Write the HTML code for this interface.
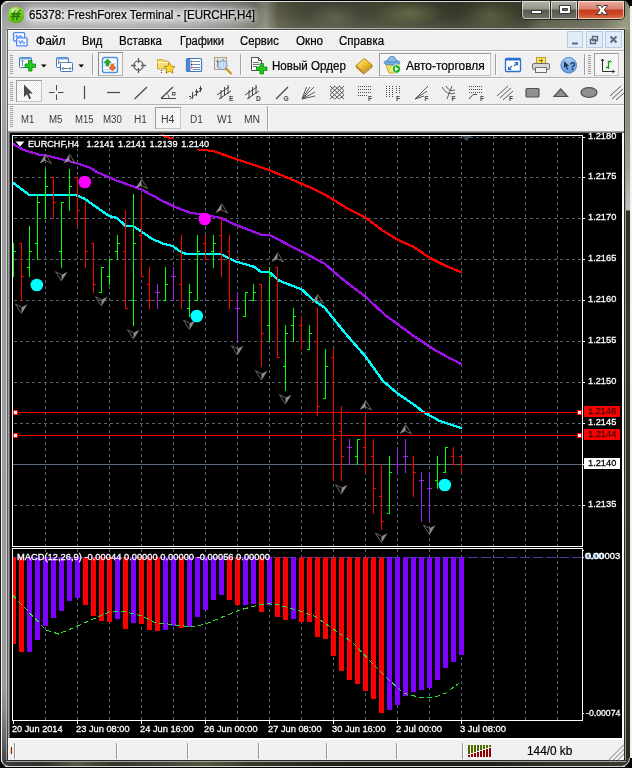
<!DOCTYPE html>
<html><head><meta charset="utf-8"><title>65378: FreshForex Terminal - [EURCHF,H4]</title>
<style>
html,body{margin:0;padding:0}
body{width:632px;height:768px;position:relative;overflow:hidden;background:#000;font-family:"Liberation Sans",sans-serif;font-size:12px;color:#000}
.abs{position:absolute}
.t{position:absolute;white-space:nowrap;line-height:1;transform-origin:0 0}
#frame{position:absolute;left:0;top:0;width:632px;height:768px;background:#b9b9b9}
#titlebg{position:absolute;left:0;top:1px;width:630px;height:29px;
 background:radial-gradient(ellipse 34px 12px at 410px 12px,rgba(128,136,88,.55),transparent),radial-gradient(ellipse 26px 16px at 335px 16px,rgba(120,124,90,.5),transparent),radial-gradient(ellipse 26px 12px at 490px 14px,rgba(110,118,80,.45),transparent),linear-gradient(90deg,#a0a0a0 0px,#a4a4a4 30px,#a0a0a0 120px,#949494 190px,#848480 230px,#74746a 254px,#8a8a7c 266px,#5c5c48 278px,#4c4c3a 300px,#45463a 335px,#484c34 400px,#383a2c 455px,#464a32 490px,#3c3e2c 525px,#5a5c48 540px,#6a6c58 600px,#909278 622px,#9a9c7c 632px)}
#tglow{position:absolute;left:24px;top:7px;width:228px;height:16px;border-radius:8px;background:linear-gradient(90deg,#fff 0,#fff 65%,rgba(255,255,255,.45) 100%);filter:blur(5px);opacity:.62}
#client{position:absolute;left:8px;top:30px;width:616px;height:730px;background:#f0f0f0}
#title{position:absolute;left:29px;top:7px;font-size:12.4px;white-space:nowrap;color:#000;text-shadow:0 0 6px #fff,0 0 9px #fff,0 0 12px #fff}
.menu{position:absolute;top:33px;font-size:12px;white-space:nowrap;transform-origin:0 0}
.tf{position:absolute;top:113px;font-size:10.5px;color:#333;white-space:nowrap}
.pl{position:absolute;left:588px;font-size:9.6px;color:#fff;white-space:nowrap;line-height:12px}
.pbox{position:absolute;left:584px;width:36px;height:11px;font-size:9.6px;line-height:11px;text-indent:4px;white-space:nowrap}
.pbox.red{background:#ff0000;color:#3a2a2a}
.pbox.wht{background:#fff;color:#000;height:10px;line-height:10px}
.tl{position:absolute;top:722px;font-size:9.6px;color:#fff;white-space:nowrap;line-height:12px}
.ct{position:absolute;font-size:9.6px;color:#fff;white-space:nowrap;line-height:11px;background:#000}
.sep{position:absolute;width:1px;background:#a0a0a0}
.grip{position:absolute;width:3px;height:18px;background:repeating-linear-gradient(180deg,#9a9a9a 0,#9a9a9a 1px,transparent 1px,transparent 2px)}
</style></head><body>
<!-- window frame -->
<div class="abs" style="left:0;top:0;width:630px;height:768px;background:#000"></div>
<div class="abs" style="left:630px;top:6px;width:2px;height:754px;background:#f4f4f4"></div>
<!-- left frame strip -->
<div class="abs" style="left:0;top:6px;width:8px;height:756px;background:linear-gradient(180deg,#a0a0a0 0,#a4a4a4 30px,#a6a6a6 90px,#9e9e9e 130px,#9c9c9c 680px,#8a8a8a 705px,#6a6a6a 730px,#505050 748px,#444 756px)"></div>
<div class="abs" style="left:0;top:6px;width:1px;height:756px;background:#1c1c1c"></div>
<div class="abs" style="left:1px;top:6px;width:1px;height:756px;background:#f2f2f2"></div>
<div class="abs" style="left:6px;top:28px;width:1px;height:734px;background:rgba(255,255,255,.45)"></div>
<div class="abs" style="left:7px;top:29px;width:1px;height:732px;background:rgba(0,0,0,.38)"></div>
<!-- right frame strip -->
<div class="abs" style="left:624px;top:6px;width:6px;height:756px;background:linear-gradient(180deg,#9a9c7c 0,#8c8c72 30px,#8c8c80 110px,#9c9c96 160px,#c2c2be 203px,#b8b8b4 204px,#2c3024 205px,#30341f 260px,#343a24 320px,#2c3020 600px,#2a2c20 756px)"></div>
<div class="abs" style="left:624px;top:29px;width:1px;height:732px;background:#26281e"></div>
<div class="abs" style="left:625px;top:28px;width:1px;height:734px;background:#9a9e96"></div>
<div id="titlebg"></div>
<div id="tglow"></div>
<div class="abs" style="left:2px;top:2px;width:626px;height:27px;background:linear-gradient(180deg,rgba(0,0,0,.13) 0,rgba(0,0,0,0) 50%,rgba(255,255,255,.10) 100%)"></div>
<div class="abs" style="left:0;top:6px;width:1px;height:30px;background:#1c1c1c"></div>
<div class="abs" style="left:1px;top:6px;width:1px;height:30px;background:#f2f2f2"></div>
<!-- bottom frame strip -->
<div class="abs" style="left:2px;top:760px;width:628px;height:7px;background:linear-gradient(90deg,#3c3c3c 0,#30302c 40px,#5a5a46 75px,#34342a 110px,#44453a 160px,#56573e 205px,#3a3a2c 245px,#222219 320px,#1e1e18 480px,#34342a 560px,#3a3a30 632px)"></div>
<div class="abs" style="left:7px;top:760px;width:618px;height:1px;background:#2a2a28"></div>
<div class="abs" style="left:6px;top:761px;width:620px;height:1px;background:#a4a4a0"></div>
<div class="abs" style="left:5px;top:766px;width:621px;height:1px;background:#d4d4d4"></div>
<div class="abs" style="left:0;top:767px;width:632px;height:1px;background:#000"></div>
<!-- top highlights -->
<div class="abs" style="left:6px;top:1px;width:620px;height:1px;background:rgba(255,255,255,.8)"></div>
<div class="abs" style="left:7px;top:28px;width:618px;height:1px;background:rgba(255,255,255,.5)"></div>
<div class="abs" style="left:7px;top:29px;width:618px;height:1px;background:#4a4a48"></div>
<!-- corners -->
<svg class="abs" style="left:0;top:0" width="632" height="768" viewBox="0 0 632 768">
<path d="M0 0H8Q2 1 0 8Z" fill="#000"/>
<path d="M1.5 9Q2 2.5 9 1.5" fill="none" stroke="#f0f0f0" stroke-width="1"/>
<path d="M632 0H622Q629 1 630 9V0Z" fill="#000"/>
<path d="M0 768H8Q2 767 0 759Z" fill="#000"/>
<path d="M1.5 759Q2 765.5 9 766.5" fill="none" stroke="#d8d8d8" stroke-width="1"/>
<path d="M632 768H620Q629 767 630 758H632Z" fill="#000"/>
<path d="M629.5 758Q629 765 622 766.5" fill="none" stroke="#d8d8d8" stroke-width="1"/>
</svg>
<div id="client"></div>
<!-- app icon -->
<svg class="abs" style="left:8px;top:7px" width="16" height="16" viewBox="0 0 16 16">
<defs><radialGradient id="gi" cx="0.42" cy="0.28" r="0.85"><stop offset="0" stop-color="#c8f880"/><stop offset="0.45" stop-color="#7cd820"/><stop offset="1" stop-color="#4aa008"/></radialGradient></defs>
<rect x="0" y="0" width="16" height="16" rx="7" fill="url(#gi)"/>
<path d="M8 3.600Q6.600 3.400 6.300 5.200L5.100 12.400M11.800 3.600Q10.400 3.400 10.100 5.200L8.900 12.400M3.800 6.800H12.200M3.300 9.400H11.700" stroke="#2c7a06" stroke-width="1.700" fill="none" stroke-linecap="round"/>
<ellipse cx="7" cy="3.200" rx="4.500" ry="1.800" fill="#fff" fill-opacity="0.350"/>
</svg>
<!-- caption buttons -->
<div class="abs" style="left:521px;top:0;width:104px;height:20px;border-radius:0 0 5px 5px;background:#23241c"></div>
<div class="abs" style="left:522px;top:1px;width:28px;height:18px;border-radius:0 0 0 4px;background:linear-gradient(180deg,#b4b4ac 0,#94948a 45%,#58584c 50%,#74746a 100%);box-shadow:inset 0 0 0 1px rgba(255,255,255,.6)"></div>
<div class="abs" style="left:551px;top:1px;width:26px;height:18px;background:linear-gradient(180deg,#b0b0a8 0,#909086 45%,#54544a 50%,#707066 100%);box-shadow:inset 0 0 0 1px rgba(255,255,255,.6)"></div>
<div class="abs" style="left:578px;top:1px;width:46px;height:18px;border-radius:0 0 4px 0;background:linear-gradient(180deg,#eab0a0 0,#d88070 45%,#c43a1c 50%,#cc4a28 75%,#d87850 100%);box-shadow:inset 0 0 0 1px rgba(255,255,255,.6)"></div>
<svg class="abs" style="left:521px;top:0" width="104" height="20" viewBox="0 0 104 20">
<rect x="10.5" y="10.5" width="10" height="3" fill="#fff" stroke="#3a3a3a" stroke-width="1"/>
<path d="M38.5 5.5h11v8h-11z M41.5 8.5h5v2h-5z" fill="#fff" fill-rule="evenodd" stroke="#3a3a3a" stroke-width="1"/>
<path d="M75.500 5.500h4l1.600 2.200 1.600-2.200h4l-3.500 4.400 3.500 4.600h-4l-1.600-2.300-1.600 2.300h-4l3.500-4.600z" fill="#fff" stroke="#4a3434" stroke-width="1"/>
</svg>
<!-- MDI icon & buttons -->
<svg class="abs" style="left:10px;top:30px" width="20" height="18" viewBox="10 30 20 18">
<rect x="13.600" y="32.600" width="11" height="8.400" rx="1" fill="#fff" stroke="#4a86f4" stroke-width="1.300"/>
<path d="M15.500 36.500l1.500-1.200v1.800h2.200l1-1.600 1.800 1.600" stroke="#4a86f4" stroke-width="1.100" fill="none"/>
<rect x="16.700" y="37.900" width="10.400" height="8" rx="1" fill="#fff" stroke="#4a86f4" stroke-width="1.300"/>
<path d="M18.700 40.300l1.800 3 1.600-2.800 1.800 3.200 1.300-1.300" stroke="#4a86f4" stroke-width="1.100" fill="none"/>
</svg>
<div class="abs" style="left:567px;top:31px;width:16px;height:17px;background:#e0ecf8;border:1px solid #b4cce4;box-sizing:border-box"></div>
<div class="abs" style="left:586px;top:31px;width:17px;height:17px;background:#e0ecf8;border:1px solid #b4cce4;box-sizing:border-box"></div>
<div class="abs" style="left:605px;top:31px;width:17px;height:17px;background:#e0ecf8;border:1px solid #b4cce4;box-sizing:border-box"></div>
<svg class="abs" style="left:567px;top:31px" width="56" height="17" viewBox="0 0 56 17">
<path d="M5 12.5h6" stroke="#5a6a80" stroke-width="2"/>
<path d="M25.5 5.5h5v4h-5z M23.5 8.5h5v4h-5z" fill="none" stroke="#5a6a80" stroke-width="1.4"/>
<path d="M43.5 5.5l6 6M49.5 5.5l-6 6" stroke="#5a6a80" stroke-width="2"/>
</svg>
<!-- toolbar separators lines -->
<div class="abs" style="left:8px;top:50px;width:616px;height:1px;background:#b0b0b0"></div>
<div class="abs" style="left:8px;top:51px;width:616px;height:1px;background:#fdfdfd"></div>
<div class="abs" style="left:8px;top:30px;width:616px;height:1px;background:#fdfdfd"></div>
<div class="abs" style="left:8px;top:77px;width:616px;height:1px;background:#b0b0b0"></div>
<div class="abs" style="left:8px;top:78px;width:616px;height:1px;background:#fbfbfb"></div>
<div class="abs" style="left:8px;top:104px;width:616px;height:1px;background:#b0b0b0"></div>
<div class="abs" style="left:8px;top:105px;width:616px;height:1px;background:#fbfbfb"></div>
<div class="abs" style="left:8px;top:131px;width:616px;height:1px;background:#a0a0a0"></div>
<div class="abs" style="left:8px;top:132px;width:616px;height:1px;background:#696969"></div>
<div class="abs" style="left:8px;top:131px;width:1px;height:607px;background:#a0a0a0"></div>
<div class="abs" style="left:9px;top:132px;width:1px;height:606px;background:#696969"></div>
<div class="abs" style="left:622px;top:133px;width:2px;height:607px;background:#fff"></div>
<svg class="abs" style="left:0;top:0" width="632" height="135" viewBox="0 0 632 135">
<defs>
<linearGradient id="gold" x1="0" y1="0" x2="1" y2="1"><stop offset="0" stop-color="#fff0a0"/><stop offset="0.5" stop-color="#f0c030"/><stop offset="1" stop-color="#c88a10"/></linearGradient>
<linearGradient id="blu" x1="0" y1="0" x2="0" y2="1"><stop offset="0" stop-color="#a8d0f8"/><stop offset="1" stop-color="#5c98e0"/></linearGradient>
<pattern id="dith" width="2" height="2" patternUnits="userSpaceOnUse"><rect width="2" height="2" fill="#fff"/><rect width="1" height="1" fill="#ececec"/><rect x="1" y="1" width="1" height="1" fill="#ececec"/></pattern>
</defs>
<!-- grips -->
<g stroke="#a0a0a0" stroke-width="1" shape-rendering="crispEdges">
<path d="M10 55.5h3M10 57.5h3M10 59.5h3M10 61.5h3M10 63.5h3M10 65.5h3M10 67.5h3M10 69.5h3M10 71.5h3M10 73.5h3"/>
<path d="M10 82.5h3M10 84.5h3M10 86.5h3M10 88.5h3M10 90.5h3M10 92.5h3M10 94.5h3M10 96.5h3M10 98.5h3M10 100.5h3"/>
<path d="M10 106.5h3M10 108.5h3M10 110.5h3M10 112.5h3M10 114.5h3M10 116.5h3M10 118.5h3M10 120.5h3M10 122.5h3M10 124.5h3M10 126.5h3"/>
<path d="M588 55.5h3M588 57.5h3M588 59.5h3M588 61.5h3M588 63.5h3M588 65.5h3M588 67.5h3M588 69.5h3M588 71.5h3M588 73.5h3"/>
</g>
<!-- separators -->
<g stroke="#a0a0a0" stroke-width="1" shape-rendering="crispEdges">
<path d="M92.5 54v21M240.5 54v21M495.5 54v21M584.5 54v21M267.5 106v24"/>
<path d="M93.5 54v21M241.5 54v21M496.5 54v21M585.5 54v21M268.5 106v24" stroke="#fcfcfc"/>
</g>
<!-- pressed buttons -->
<g shape-rendering="crispEdges">
<rect x="98.5" y="52.5" width="24" height="23" fill="url(#dith)" stroke="#b4b4b4"/>
<path d="M98.5 75.5v-23h24" fill="none" stroke="#8c8c8c"/>
<rect x="379.5" y="53.500" width="111" height="22" fill="url(#dith)" stroke="#c4c4c4"/>
<path d="M379.5 75.5v-22h111" fill="none" stroke="#9c9c9c"/>
<rect x="594.5" y="53.5" width="24" height="22" fill="url(#dith)" stroke="#c4c4c4"/>
<path d="M594.5 75.5v-22h24" fill="none" stroke="#9c9c9c"/>
<rect x="16.5" y="80.500" width="25" height="21" fill="url(#dith)" stroke="#c4c4c4"/>
<path d="M16.5 101.5v-21h25" fill="none" stroke="#9c9c9c"/>
<rect x="155.5" y="107.5" width="25" height="21" fill="url(#dith)" stroke="#c4c4c4"/>
<path d="M155.5 128.5v-21h25" fill="none" stroke="#9c9c9c"/>
</g>
<!-- TB1 icon1: new chart -->
<rect x="19.500" y="57.5" width="12" height="10" rx="1" fill="#fff" stroke="#3a78c8"/>
<path d="M20 58.500h11" stroke="#6aa0e0" stroke-width="2"/>
<path d="M22.500 60v6M21 61.500l1.500-1.500 1.500 1.500" stroke="#7088a8" fill="none"/>
<path d="M28.500 60.500h3.500v3.500h3.500v3.500h-3.500v3.500h-3.500v-3.500h-3.500v-3.500h3.500z" fill="#20c820" stroke="#0a8a0a" stroke-width="0.8"/>
<path d="M41 64.500h5.500l-2.750 3z" fill="#000"/>
<!-- icon2: profiles -->
<rect x="56.500" y="57.500" width="12" height="10" rx="1" fill="#fff" stroke="#3a78c8"/>
<rect x="60.500" y="62.500" width="12" height="9" rx="1" fill="#fff" stroke="#3a78c8"/>
<path d="M57 58.500h11" stroke="#6aa0e0" stroke-width="2"/>
<path d="M58.500 60v4M59 62.500h8" stroke="#7088a8" fill="none"/>
<path d="M62 68.500h9M63.500 67l-1.500 1.500 1.500 1.500M69.500 67l1.500 1.500-1.500 1.500" stroke="#7088a8" fill="none"/>
<path d="M78.500 64.500h5.500l-2.750 3z" fill="#000"/>
<!-- market watch -->
<rect x="102.500" y="57.500" width="15" height="15" rx="2" fill="#fff" stroke="#4a90e0" stroke-width="1.400"/>
<path d="M104 66.500h12M104 69.500h12M104 63.500h12" stroke="#c8d8e8"/>
<path d="M107.500 59l3.500 3.500h-2v3h-3v-3h-2z" fill="#20b020" stroke="#108010" stroke-width="0.600"/>
<path d="M112.500 71l3.500-3.500h-2v-3h-3v3h-2z" fill="#f07030" stroke="#c04010" stroke-width="0.600"/>
<!-- crosshair -->
<circle cx="138.500" cy="65.500" r="4.600" fill="none" stroke="#606060" stroke-width="1.300"/>
<path d="M131 65.500h5M141 65.500h5M138.500 58v5M138.500 68v5" stroke="#606060" stroke-width="1.300"/>
<!-- folder star -->
<path d="M157.500 59.500h5l1 1.500h5v8h-11z" fill="#f4dc78" stroke="#c8a028" stroke-width="0.900"/>
<path d="M157.500 62.500h11" stroke="#fff8c8"/>
<path d="M161.500 70v3" stroke="#404040" stroke-dasharray="1 1"/>
<path d="M169.500 62.500l1.700 3.600 3.900.5-2.900 2.700.8 3.900-3.500-2-3.500 2 .8-3.900-2.900-2.700 3.900-.5z" fill="#f8d838" stroke="#b88a10" stroke-width="0.900"/>
<!-- navigator/list -->
<rect x="186.500" y="58.500" width="15" height="13" rx="1" fill="#fff" stroke="#3a78c8" stroke-width="1.200"/>
<rect x="187" y="59" width="3.500" height="12" fill="#4a88d8"/>
<path d="M193 61.500h7M193 64.500h7M193 67.500h7M193 69.500h7" stroke="#6a8ab8"/>
<path d="M191 61.500h1.500M191 67.500h1.500" stroke="#e02020" stroke-width="1.500"/>
<path d="M191 64.500h1.500" stroke="#202020" stroke-width="1.500"/>
<!-- tester -->
<rect x="214.500" y="57.500" width="12" height="12" fill="#ece4d4" stroke="#a8a090"/>
<path d="M217.500 59v8M223.500 59v8M216 61.500h9" stroke="#808898"/>
<circle cx="222.500" cy="65" r="4.600" fill="#c0dcf8" fill-opacity="0.850" stroke="#88a8d0" stroke-width="1.200"/>
<path d="M226 68.500l5 5" stroke="#c89820" stroke-width="2.200" stroke-linecap="round"/>
<!-- new order -->
<path d="M251.500 57.500h7l3 3v10h-10z" fill="#fff" stroke="#505050"/>
<path d="M258.500 57.500v3h3" fill="none" stroke="#505050"/>
<path d="M253 62.500h6M253 64.500h6M253 66.500h4" stroke="#707070"/>
<path d="M260 63.500h3.500v3.500h3.500v3.500h-3.500v3.500h-3.500v-3.500h-3.500v-3.500h3.500z" fill="#20c820" stroke="#0a8a0a" stroke-width="0.800"/>
<!-- book -->
<path d="M356 65.500l8.500-7 7.500 6.500-8.500 7z" fill="url(#gold)" stroke="#b07808" stroke-width="0.900"/>
<path d="M356 65.500l.8 2.200 7 6 8.200-7-.2-1.700" fill="none" stroke="#b07808" stroke-width="1.100"/>
<!-- auto trade icon -->
<path d="M385.500 63.500h14l-2.500 9.500h-8z" fill="#f4e060" stroke="#c0a020" stroke-width="0.900"/>
<ellipse cx="392" cy="62.500" rx="8" ry="2.600" fill="#78b0e4" stroke="#3c78b8" stroke-width="0.800"/>
<path d="M387.500 62q.5-5.500 4.500-5.500t4.500 5.500z" fill="#88bcec" stroke="#3c78b8" stroke-width="0.800"/>
<circle cx="396.500" cy="69" r="4.300" fill="#20b828" stroke="#fff" stroke-width="0.900"/>
<path d="M395 66.700v4.600l3.600-2.300z" fill="#fff"/>
<!-- fullscreen -->
<rect x="505.500" y="58.500" width="15" height="13" rx="1" fill="#fff" stroke="#2a70d0" stroke-width="1.300"/>
<path d="M506 59.500h14" stroke="#2a70d0" stroke-width="2"/>
<path d="M508.500 69.500l3.500-3.500M508.500 66.500v3h3M517.500 62.500l-3.500 3.500M514.500 62.500h3v3" stroke="#2a70d0" stroke-width="1.200" fill="none"/>
<!-- printer -->
<rect x="536.500" y="57.500" width="9" height="8" fill="#f8e060" stroke="#b89820" stroke-width="0.900"/>
<path d="M539 60.500h4M541.500 59v4" stroke="#8a7010"/>
<rect x="532.500" y="63.500" width="17" height="6" rx="1.500" fill="#d8d8d8" stroke="#707070"/>
<rect x="535.500" y="67.500" width="11" height="5" fill="#f4f4f4" stroke="#707070"/>
<!-- help -->
<circle cx="568.700" cy="65.300" r="7.800" fill="url(#blu)" stroke="#4a80c8" stroke-width="1"/>
<path d="M564 61v7l1.700-1.500 1.300 3 1.200-.5-1.300-3h2.300z" fill="#203050"/>
<text x="569.500" y="69.500" font-family="Liberation Sans,sans-serif" font-weight="bold" font-size="10" fill="#203050">?</text>
<!-- chart shift icon -->
<path d="M602.500 59v12.500h12M601 61l1.500-2 1.500 2M612.500 70l2 1.500-2 1.500" stroke="#303030" fill="none"/>
<path d="M608.500 69v-8M608.500 61.500h3M606 67.500h2.500" stroke="#10a010" stroke-width="1.300" fill="none"/>
<!-- TB2 -->
<g stroke="#484848" stroke-width="1.200" fill="none">
<path d="M24 84.500v12.500l3-2.800 2.300 5 1.800-.8-2.300-4.900h4z" fill="#484848" stroke="none"/>
<path d="M49 92.500h5.500M58 92.500h5.500M56.500 85v5.500M56.500 94.500v5.500" stroke-width="1"/>
<path d="M84.500 86v13" />
<path d="M107 92.500h13"/>
<path d="M134.500 99l12.500-12"/>
<!-- angle -->
<path d="M161 98.500h15M161 98.500l12-11.500"/>
<path d="M169 98q0-3-2-4.500" stroke-width="0.800"/>
<rect x="172.500" y="92.500" width="2.500" height="2.500" stroke-width="0.900"/>
<!-- channels -->
<path d="M190 99l12-10M192.500 92v7M196.500 89v7M200.500 86v6M189 96.500h2M195 91.500h3M199 88.500h3" stroke-width="1"/>
<path d="M217 95l12-8M219 99l12-8M221 90v9M224.500 87v9M228 85v9" stroke-width="1"/>
<path d="M245 95l12-8M247 99l12-8M249 90v9M252.500 87v9M256 85v9" stroke-width="1"/>
<path d="M276 99l12-12"/>
<!-- gann fan -->
<path d="M302 99l12-12M302 99l13-7M302 99l13-3M302 99l8-12M302 99l4.500-12" stroke-width="0.900"/>
<!-- gann grid -->
<path d="M330 86l14 13M330 90.500l9 8.500M330 95l4.500 4M334.500 86l9.500 8.500M339 86l5 4.500M344 86l-14 13M344 90.500l-9 8.500M344 95l-4.500 4M339.500 86l-9.500 8.500M335 86l-5 4.500" stroke-width="0.900"/>
<!-- fibo retracement -->
<path d="M358 86.500h14M358 89.500h14M358 92.500h14M358 95.500h9" stroke-width="1" stroke-dasharray="1 1"/>
<!-- fibo time zones -->
<path d="M386.500 86v12M389.500 86v12M392.500 86v12M396.500 86v8M399.500 86v8" stroke-width="1" stroke-dasharray="1 1"/>
<!-- fibo fan -->
<path d="M415 99l13-13M415 99l12-8M415 99l9-3" stroke-width="0.900"/>
<!-- fibo arcs -->
<path d="M442 87q5 9 13 6M446 86q3 6 9 4M452 86l-5 13" stroke-width="0.900"/>
<!-- fibo expansion -->
<path d="M469 86.500h14M469 89.500h14M469 92.500h14" stroke-width="1" stroke-dasharray="1 1"/>
<path d="M469 99l4-4.500h4" stroke-width="1"/>
<!-- fibo channel -->
<path d="M497 96l11-10M500 98l11-10M503 100l10-9" stroke-width="0.900"/>
<!-- shapes -->
<rect x="526" y="88.500" width="13" height="8.500" rx="1" fill="#909090" stroke="#505050"/>
<path d="M554 96.500h13.500l-6.750-7.500z" fill="#909090" stroke="#505050"/>
<ellipse cx="589" cy="92.500" rx="8" ry="4.800" fill="#909090" stroke="#505050"/>
<path d="M610 96l11-10M612 99l11-10M616 100l8-7" stroke-width="0.900"/>
</g>
<g font-family="Liberation Sans,sans-serif" font-weight="bold" font-size="6.500" fill="#484848">
<text x="229" y="100.500">E</text><text x="256" y="100.500">D</text><text x="283.500" y="100.500">G</text>
<text x="368" y="100.500">F</text><text x="396" y="100.500">F</text><text x="424.500" y="100.500">F</text><text x="451.500" y="100.500">F</text><text x="480" y="100.500">F</text><text x="509" y="100.500">F</text>
</g>
</svg>

<svg class="chart" width="632" height="768" viewBox="0 0 632 768" style="position:absolute;left:0;top:0">
<rect x="10" y="133" width="612" height="605" fill="#000"/>
<path d="M45.5 136V546 M45.5 549V720 M77.5 136V546 M77.5 549V720 M109.5 136V546 M109.5 549V720 M141.5 136V546 M141.5 549V720 M173.5 136V546 M173.5 549V720 M205.5 136V546 M205.5 549V720 M237.5 136V546 M237.5 549V720 M269.5 136V546 M269.5 549V720 M301.5 136V546 M301.5 549V720 M333.5 136V546 M333.5 549V720 M365.5 136V546 M365.5 549V720 M397.5 136V546 M397.5 549V720 M429.5 136V546 M429.5 549V720 M461.5 136V546 M461.5 549V720 M493.5 136V546 M493.5 549V720 M525.5 136V546 M525.5 549V720 M557.5 136V546 M557.5 549V720 M14 137.5H582 M14 177.5H582 M14 218.5H582 M14 259.5H582 M14 300.5H582 M14 341.5H582 M14 382.5H582 M14 423.5H582 M14 464.5H582 M14 505.5H582" stroke="#546474" stroke-width="1" stroke-dasharray="3 3" fill="none" shape-rendering="crispEdges"/>
<path d="M13 464.5H582" stroke="#5c6c7c" stroke-width="1" shape-rendering="crispEdges"/>
<polyline points="161.5,134.5 164.5,135.7 200.0,149.2 212.5,150.5 235.5,158.5 268.5,169.5 291.1,178.9 311.5,187.7 326.5,195.3 346.9,208.0 364.5,216.8 382.5,230.3 397.5,239.5 412.5,246.0 429.2,257.3 445.5,265.5 460.9,271.8" stroke="#ff0000" stroke-width="1" fill="none" shape-rendering="crispEdges"/>
<polyline points="161.5,135.5 164.5,136.7 200.0,150.2 212.5,151.5 235.5,159.5 268.5,170.5 291.1,179.9 311.5,188.7 326.5,196.3 346.9,209.0 364.5,217.8 382.5,231.3 397.5,240.5 412.5,247.0 429.2,258.3 445.5,266.5 460.9,272.8" stroke="#ff0000" stroke-width="1" fill="none" shape-rendering="crispEdges"/>
<polyline points="162.5,134.5 165.5,135.7 201.0,149.2 213.5,150.5 236.5,158.5 269.5,169.5 292.1,178.9 312.5,187.7 327.5,195.3 347.9,208.0 365.5,216.8 383.5,230.3 398.5,239.5 413.5,246.0 430.2,257.3 446.5,265.5 461.9,271.8" stroke="#ff0000" stroke-width="1" fill="none" shape-rendering="crispEdges"/>
<polyline points="162.5,135.5 165.5,136.7 201.0,150.2 213.5,151.5 236.5,159.5 269.5,170.5 292.1,179.9 312.5,188.7 327.5,196.3 347.9,209.0 365.5,217.8 383.5,231.3 398.5,240.5 413.5,247.0 430.2,258.3 446.5,266.5 461.9,272.8" stroke="#ff0000" stroke-width="1" fill="none" shape-rendering="crispEdges"/>
<polyline points="12.5,143.5 22.5,149.2 37.9,154.0 45.5,154.8 68.3,160.5 78.5,163.5 89.5,167.1 96.1,171.5 116.5,180.1 140.9,189.0 159.5,199.1 174.5,206.5 189.9,212.3 205.1,214.3 220.3,217.5 235.5,224.5 260.5,234.1 268.5,234.1 291.1,246.0 311.5,256.5 324.2,263.2 336.8,274.3 352.0,286.5 364.5,295.8 384.9,314.8 412.8,335.1 435.5,350.3 460.9,363.7" stroke="#a010e8" stroke-width="1" fill="none" shape-rendering="crispEdges"/>
<polyline points="12.5,144.5 22.5,150.2 37.9,155.0 45.5,155.8 68.3,161.5 78.5,164.5 89.5,168.1 96.1,172.5 116.5,181.1 140.9,190.0 159.5,200.1 174.5,207.5 189.9,213.3 205.1,215.3 220.3,218.5 235.5,225.5 260.5,235.1 268.5,235.1 291.1,247.0 311.5,257.5 324.2,264.2 336.8,275.3 352.0,287.5 364.5,296.8 384.9,315.8 412.8,336.1 435.5,351.3 460.9,364.7" stroke="#a010e8" stroke-width="1" fill="none" shape-rendering="crispEdges"/>
<polyline points="13.5,143.5 23.5,149.2 38.9,154.0 46.5,154.8 69.3,160.5 79.5,163.5 90.5,167.1 97.1,171.5 117.5,180.1 141.9,189.0 160.5,199.1 175.5,206.5 190.9,212.3 206.1,214.3 221.3,217.5 236.5,224.5 261.5,234.1 269.5,234.1 292.1,246.0 312.5,256.5 325.2,263.2 337.8,274.3 353.0,286.5 365.5,295.8 385.9,314.8 413.8,335.1 436.5,350.3 461.9,363.7" stroke="#a010e8" stroke-width="1" fill="none" shape-rendering="crispEdges"/>
<polyline points="13.5,144.5 23.5,150.2 38.9,155.0 46.5,155.8 69.3,161.5 79.5,164.5 90.5,168.1 97.1,172.5 117.5,181.1 141.9,190.0 160.5,200.1 175.5,207.5 190.9,213.3 206.1,215.3 221.3,218.5 236.5,225.5 261.5,235.1 269.5,235.1 292.1,247.0 312.5,257.5 325.2,264.2 337.8,275.3 353.0,287.5 365.5,296.8 385.9,315.8 413.8,336.1 436.5,351.3 461.9,364.7" stroke="#a010e8" stroke-width="1" fill="none" shape-rendering="crispEdges"/>
<polyline points="12.5,182.2 29.0,194.5 75.9,194.8 83.5,197.9 108.5,215.5 116.5,217.5 125.2,225.5 132.5,225.5 139.1,229.8 151.7,238.4 162.8,243.3 172.3,245.5 178.6,250.3 185.7,253.5 220.3,253.5 235.5,261.1 253.2,266.2 260.5,271.3 268.5,271.3 278.5,280.1 301.3,289.0 311.5,298.5 324.2,307.2 344.5,332.5 364.5,355.3 382.5,380.5 397.5,393.3 412.5,403.5 422.9,411.5 438.1,419.9 460.9,427.5" stroke="#00ffff" stroke-width="1" fill="none" shape-rendering="crispEdges"/>
<polyline points="12.5,183.2 29.0,195.5 75.9,195.8 83.5,198.9 108.5,216.5 116.5,218.5 125.2,226.5 132.5,226.5 139.1,230.8 151.7,239.4 162.8,244.3 172.3,246.5 178.6,251.3 185.7,254.5 220.3,254.5 235.5,262.1 253.2,267.2 260.5,272.3 268.5,272.3 278.5,281.1 301.3,290.0 311.5,299.5 324.2,308.2 344.5,333.5 364.5,356.3 382.5,381.5 397.5,394.3 412.5,404.5 422.9,412.5 438.1,420.9 460.9,428.5" stroke="#00ffff" stroke-width="1" fill="none" shape-rendering="crispEdges"/>
<polyline points="13.5,182.2 30.0,194.5 76.9,194.8 84.5,197.9 109.5,215.5 117.5,217.5 126.2,225.5 133.5,225.5 140.1,229.8 152.7,238.4 163.8,243.3 173.3,245.5 179.6,250.3 186.7,253.5 221.3,253.5 236.5,261.1 254.2,266.2 261.5,271.3 269.5,271.3 279.5,280.1 302.3,289.0 312.5,298.5 325.2,307.2 345.5,332.5 365.5,355.3 383.5,380.5 398.5,393.3 413.5,403.5 423.9,411.5 439.1,419.9 461.9,427.5" stroke="#00ffff" stroke-width="1" fill="none" shape-rendering="crispEdges"/>
<polyline points="13.5,183.2 30.0,195.5 76.9,195.8 84.5,198.9 109.5,216.5 117.5,218.5 126.2,226.5 133.5,226.5 140.1,230.8 152.7,239.4 163.8,244.3 173.3,246.5 179.6,251.3 186.7,254.5 221.3,254.5 236.5,262.1 254.2,267.2 261.5,272.3 269.5,272.3 279.5,281.1 302.3,290.0 312.5,299.5 325.2,308.2 345.5,333.5 365.5,356.3 383.5,381.5 398.5,394.3 413.5,404.5 423.9,412.5 439.1,420.9 461.9,428.5" stroke="#00ffff" stroke-width="1" fill="none" shape-rendering="crispEdges"/>
<path d="M13.5 243V277M13 251.5H16" stroke="#00ff00" stroke-width="1" fill="none" shape-rendering="crispEdges"/>
<path d="M21.5 243V301M19 243.5H22M21 276.5H24" stroke="#ff0000" stroke-width="1" fill="none" shape-rendering="crispEdges"/>
<path d="M29.5 226V277M27 267.5H30M29 251.5H32" stroke="#00ff00" stroke-width="1" fill="none" shape-rendering="crispEdges"/>
<path d="M37.5 194V260M35 243.5H38M37 202.5H40" stroke="#00ff00" stroke-width="1" fill="none" shape-rendering="crispEdges"/>
<path d="M45.5 169V219M43 194.5H46M45 186.5H48" stroke="#00ff00" stroke-width="1" fill="none" shape-rendering="crispEdges"/>
<path d="M53.5 177V219M51 177.5H54M53 202.5H56" stroke="#ff0000" stroke-width="1" fill="none" shape-rendering="crispEdges"/>
<path d="M61.5 202V268M59 251.5H62M61 202.5H64" stroke="#00ff00" stroke-width="1" fill="none" shape-rendering="crispEdges"/>
<path d="M69.5 169V211M67 194.5H70M69 186.5H72" stroke="#00ff00" stroke-width="1" fill="none" shape-rendering="crispEdges"/>
<path d="M77.5 177V227M75 177.5H78M77 210.5H80" stroke="#ff0000" stroke-width="1" fill="none" shape-rendering="crispEdges"/>
<path d="M85.5 202V268M83 218.5H86M85 251.5H88" stroke="#ff0000" stroke-width="1" fill="none" shape-rendering="crispEdges"/>
<path d="M93.5 243V293M91 243.5H94M93 284.5H96" stroke="#ff0000" stroke-width="1" fill="none" shape-rendering="crispEdges"/>
<path d="M101.5 267V293M99 292.5H102M101 267.5H104" stroke="#00ff00" stroke-width="1" fill="none" shape-rendering="crispEdges"/>
<path d="M109.5 259V285M107 276.5H110M109 259.5H112" stroke="#00ff00" stroke-width="1" fill="none" shape-rendering="crispEdges"/>
<path d="M117.5 235V260M115 251.5H118M117 243.5H120" stroke="#00ff00" stroke-width="1" fill="none" shape-rendering="crispEdges"/>
<path d="M125.5 210V309M123 251.5H126M125 308.5H128" stroke="#ff0000" stroke-width="1" fill="none" shape-rendering="crispEdges"/>
<path d="M133.5 194V326M131 300.5H134M133 243.5H136" stroke="#00ff00" stroke-width="1" fill="none" shape-rendering="crispEdges"/>
<path d="M141.5 194V277M139 235.5H142M141 276.5H144" stroke="#ff0000" stroke-width="1" fill="none" shape-rendering="crispEdges"/>
<path d="M149.5 267V309M147 284.5H150M149 300.5H152" stroke="#ff0000" stroke-width="1" fill="none" shape-rendering="crispEdges"/>
<path d="M157.5 284V309M155 292.5H158M157 292.5H160" stroke="#a020f0" stroke-width="1" fill="none" shape-rendering="crispEdges"/>
<path d="M165.5 267V301M163 300.5H166M165 284.5H168" stroke="#00ff00" stroke-width="1" fill="none" shape-rendering="crispEdges"/>
<path d="M173.5 267V301M171 276.5H174M173 276.5H176" stroke="#a020f0" stroke-width="1" fill="none" shape-rendering="crispEdges"/>
<path d="M181.5 235V309M179 284.5H182M181 300.5H184" stroke="#ff0000" stroke-width="1" fill="none" shape-rendering="crispEdges"/>
<path d="M189.5 284V317M187 308.5H190M189 292.5H192" stroke="#00ff00" stroke-width="1" fill="none" shape-rendering="crispEdges"/>
<path d="M197.5 235V301M195 300.5H198M197 251.5H200" stroke="#00ff00" stroke-width="1" fill="none" shape-rendering="crispEdges"/>
<path d="M205.5 235V260M203 243.5H206M205 259.5H208" stroke="#ff0000" stroke-width="1" fill="none" shape-rendering="crispEdges"/>
<path d="M213.5 235V268M211 251.5H214M213 243.5H216" stroke="#00ff00" stroke-width="1" fill="none" shape-rendering="crispEdges"/>
<path d="M221.5 218V277M219 235.5H222M221 259.5H224" stroke="#ff0000" stroke-width="1" fill="none" shape-rendering="crispEdges"/>
<path d="M229.5 235V309M227 251.5H230M229 300.5H232" stroke="#ff0000" stroke-width="1" fill="none" shape-rendering="crispEdges"/>
<path d="M237.5 292V342M235 308.5H238M237 308.5H240" stroke="#a020f0" stroke-width="1" fill="none" shape-rendering="crispEdges"/>
<path d="M245.5 292V317M243 316.5H246M245 292.5H248" stroke="#00ff00" stroke-width="1" fill="none" shape-rendering="crispEdges"/>
<path d="M253.5 284V301M251 300.5H254M253 292.5H256" stroke="#00ff00" stroke-width="1" fill="none" shape-rendering="crispEdges"/>
<path d="M261.5 284V367M259 284.5H262M261 333.5H264" stroke="#ff0000" stroke-width="1" fill="none" shape-rendering="crispEdges"/>
<path d="M269.5 267V342M267 325.5H270M269 276.5H272" stroke="#00ff00" stroke-width="1" fill="none" shape-rendering="crispEdges"/>
<path d="M277.5 267V358M275 267.5H278M277 357.5H280" stroke="#ff0000" stroke-width="1" fill="none" shape-rendering="crispEdges"/>
<path d="M285.5 325V391M283 366.5H286M285 333.5H288" stroke="#00ff00" stroke-width="1" fill="none" shape-rendering="crispEdges"/>
<path d="M293.5 308V342M291 325.5H294M293 316.5H296" stroke="#00ff00" stroke-width="1" fill="none" shape-rendering="crispEdges"/>
<path d="M301.5 316V350M299 325.5H302M301 341.5H304" stroke="#ff0000" stroke-width="1" fill="none" shape-rendering="crispEdges"/>
<path d="M309.5 325V350M307 349.5H310M309 333.5H312" stroke="#00ff00" stroke-width="1" fill="none" shape-rendering="crispEdges"/>
<path d="M317.5 308V416M315 341.5H318M317 406.5H320" stroke="#ff0000" stroke-width="1" fill="none" shape-rendering="crispEdges"/>
<path d="M325.5 349V399M323 398.5H326M325 366.5H328" stroke="#00ff00" stroke-width="1" fill="none" shape-rendering="crispEdges"/>
<path d="M333.5 349V481M331 357.5H334M333 439.5H336" stroke="#ff0000" stroke-width="1" fill="none" shape-rendering="crispEdges"/>
<path d="M341.5 406V481M339 431.5H342M341 456.5H344" stroke="#ff0000" stroke-width="1" fill="none" shape-rendering="crispEdges"/>
<path d="M349.5 439V465M347 447.5H350M349 447.5H352" stroke="#a020f0" stroke-width="1" fill="none" shape-rendering="crispEdges"/>
<path d="M357.5 439V465M355 456.5H358M357 439.5H360" stroke="#00ff00" stroke-width="1" fill="none" shape-rendering="crispEdges"/>
<path d="M365.5 415V473M363 447.5H366M365 464.5H368" stroke="#ff0000" stroke-width="1" fill="none" shape-rendering="crispEdges"/>
<path d="M373.5 439V514M371 456.5H374M373 488.5H376" stroke="#ff0000" stroke-width="1" fill="none" shape-rendering="crispEdges"/>
<path d="M381.5 464V530M379 496.5H382M381 521.5H384" stroke="#ff0000" stroke-width="1" fill="none" shape-rendering="crispEdges"/>
<path d="M389.5 456V514M387 513.5H390M389 472.5H392" stroke="#00ff00" stroke-width="1" fill="none" shape-rendering="crispEdges"/>
<path d="M397.5 447V473M395 464.5H398M397 464.5H400" stroke="#a020f0" stroke-width="1" fill="none" shape-rendering="crispEdges"/>
<path d="M405.5 439V473M403 456.5H406M405 456.5H408" stroke="#a020f0" stroke-width="1" fill="none" shape-rendering="crispEdges"/>
<path d="M413.5 456V497M411 464.5H414M413 472.5H416" stroke="#ff0000" stroke-width="1" fill="none" shape-rendering="crispEdges"/>
<path d="M421.5 472V522M419 480.5H422M421 480.5H424" stroke="#a020f0" stroke-width="1" fill="none" shape-rendering="crispEdges"/>
<path d="M429.5 472V522M427 488.5H430M429 488.5H432" stroke="#a020f0" stroke-width="1" fill="none" shape-rendering="crispEdges"/>
<path d="M437.5 456V489M435 480.5H438M437 464.5H440" stroke="#00ff00" stroke-width="1" fill="none" shape-rendering="crispEdges"/>
<path d="M445.5 447V473M443 472.5H446M445 447.5H448" stroke="#00ff00" stroke-width="1" fill="none" shape-rendering="crispEdges"/>
<path d="M453.5 447V465M451 456.5H454M453 464.5H456" stroke="#ff0000" stroke-width="1" fill="none" shape-rendering="crispEdges"/>
<path d="M461.5 456V473M459 456.5H462M461 464.5H464" stroke="#ff0000" stroke-width="1" fill="none" shape-rendering="crispEdges"/>
<path d="M13 412.5H582M13 435.5H582" stroke="#ff0000" stroke-width="1" shape-rendering="crispEdges"/>
<rect x="13.5" y="410.5" width="4" height="4" fill="#fff" stroke="#ff0000" stroke-width="1" shape-rendering="crispEdges"/>
<rect x="577.5" y="410.5" width="4" height="4" fill="#fff" stroke="#ff0000" stroke-width="1" shape-rendering="crispEdges"/>
<rect x="13.5" y="433.5" width="4" height="4" fill="#fff" stroke="#ff0000" stroke-width="1" shape-rendering="crispEdges"/>
<rect x="577.5" y="433.5" width="4" height="4" fill="#fff" stroke="#ff0000" stroke-width="1" shape-rendering="crispEdges"/>
<g transform="translate(45.5,159)"><path d="M0 -5L-6 4.5L0 1.5Z" fill="#8c8c8c"/><path d="M0 -5L6 4.5L0 1.5" fill="none" stroke="#6a6458" stroke-width="1"/></g>
<g transform="translate(69.5,159)"><path d="M0 -5L-6 4.5L0 1.5Z" fill="#8c8c8c"/><path d="M0 -5L6 4.5L0 1.5" fill="none" stroke="#6a6458" stroke-width="1"/></g>
<g transform="translate(141.5,184)"><path d="M0 -5L-6 4.5L0 1.5Z" fill="#8c8c8c"/><path d="M0 -5L6 4.5L0 1.5" fill="none" stroke="#6a6458" stroke-width="1"/></g>
<g transform="translate(221.5,208.5)"><path d="M0 -5L-6 4.5L0 1.5Z" fill="#8c8c8c"/><path d="M0 -5L6 4.5L0 1.5" fill="none" stroke="#6a6458" stroke-width="1"/></g>
<g transform="translate(277.5,257.5)"><path d="M0 -5L-6 4.5L0 1.5Z" fill="#8c8c8c"/><path d="M0 -5L6 4.5L0 1.5" fill="none" stroke="#6a6458" stroke-width="1"/></g>
<g transform="translate(317.5,299)"><path d="M0 -5L-6 4.5L0 1.5Z" fill="#8c8c8c"/><path d="M0 -5L6 4.5L0 1.5" fill="none" stroke="#6a6458" stroke-width="1"/></g>
<g transform="translate(365.5,405.5)"><path d="M0 -5L-6 4.5L0 1.5Z" fill="#8c8c8c"/><path d="M0 -5L6 4.5L0 1.5" fill="none" stroke="#6a6458" stroke-width="1"/></g>
<g transform="translate(405.5,429.5)"><path d="M0 -5L-6 4.5L0 1.5Z" fill="#8c8c8c"/><path d="M0 -5L6 4.5L0 1.5" fill="none" stroke="#6a6458" stroke-width="1"/></g>
<g transform="translate(21.5,308.7)"><path d="M0 5L6 -4.5L0 -1.5Z" fill="#8c8c8c"/><path d="M0 5L-6 -4.5L0 -1.5" fill="none" stroke="#6a6458" stroke-width="1"/></g>
<g transform="translate(61.5,276.2)"><path d="M0 5L6 -4.5L0 -1.5Z" fill="#8c8c8c"/><path d="M0 5L-6 -4.5L0 -1.5" fill="none" stroke="#6a6458" stroke-width="1"/></g>
<g transform="translate(101.5,301.2)"><path d="M0 5L6 -4.5L0 -1.5Z" fill="#8c8c8c"/><path d="M0 5L-6 -4.5L0 -1.5" fill="none" stroke="#6a6458" stroke-width="1"/></g>
<g transform="translate(133.5,334.2)"><path d="M0 5L6 -4.5L0 -1.5Z" fill="#8c8c8c"/><path d="M0 5L-6 -4.5L0 -1.5" fill="none" stroke="#6a6458" stroke-width="1"/></g>
<g transform="translate(189.5,324.7)"><path d="M0 5L6 -4.5L0 -1.5Z" fill="#8c8c8c"/><path d="M0 5L-6 -4.5L0 -1.5" fill="none" stroke="#6a6458" stroke-width="1"/></g>
<g transform="translate(237.5,350.2)"><path d="M0 5L6 -4.5L0 -1.5Z" fill="#8c8c8c"/><path d="M0 5L-6 -4.5L0 -1.5" fill="none" stroke="#6a6458" stroke-width="1"/></g>
<g transform="translate(261.5,375.2)"><path d="M0 5L6 -4.5L0 -1.5Z" fill="#8c8c8c"/><path d="M0 5L-6 -4.5L0 -1.5" fill="none" stroke="#6a6458" stroke-width="1"/></g>
<g transform="translate(285.5,399.2)"><path d="M0 5L6 -4.5L0 -1.5Z" fill="#8c8c8c"/><path d="M0 5L-6 -4.5L0 -1.5" fill="none" stroke="#6a6458" stroke-width="1"/></g>
<g transform="translate(341.5,489.2)"><path d="M0 5L6 -4.5L0 -1.5Z" fill="#8c8c8c"/><path d="M0 5L-6 -4.5L0 -1.5" fill="none" stroke="#6a6458" stroke-width="1"/></g>
<g transform="translate(381.5,537.7)"><path d="M0 5L6 -4.5L0 -1.5Z" fill="#8c8c8c"/><path d="M0 5L-6 -4.5L0 -1.5" fill="none" stroke="#6a6458" stroke-width="1"/></g>
<g transform="translate(429.5,529.7)"><path d="M0 5L6 -4.5L0 -1.5Z" fill="#8c8c8c"/><path d="M0 5L-6 -4.5L0 -1.5" fill="none" stroke="#6a6458" stroke-width="1"/></g>
<circle cx="84.8" cy="182" r="6.3" fill="#ff00ff"/>
<circle cx="204.8" cy="219" r="6.3" fill="#ff00ff"/>
<circle cx="36.8" cy="285" r="6.3" fill="#00ffff"/>
<circle cx="196.8" cy="316" r="6.3" fill="#00ffff"/>
<circle cx="444.8" cy="485" r="6.3" fill="#00ffff"/>
<path d="M15.5 141.5H24.5L20 146.5Z" fill="#fff"/>
<path d="M461.500 136H471.500L466.500 141Z" fill="#3e4a56"/>
<path d="M13 557.5H582" stroke="#4a3aa0" stroke-width="1" stroke-dasharray="10 3" shape-rendering="crispEdges"/>
<rect x="13" y="557" width="3" height="87" fill="#ff0000" shape-rendering="crispEdges"/>
<rect x="19" y="557" width="5" height="95" fill="#ff0000" shape-rendering="crispEdges"/>
<rect x="27" y="557" width="5" height="95" fill="#8000ff" shape-rendering="crispEdges"/>
<rect x="35" y="557" width="5" height="83" fill="#8000ff" shape-rendering="crispEdges"/>
<rect x="43" y="557" width="5" height="69" fill="#8000ff" shape-rendering="crispEdges"/>
<rect x="51" y="557" width="5" height="61" fill="#8000ff" shape-rendering="crispEdges"/>
<rect x="59" y="557" width="5" height="54" fill="#8000ff" shape-rendering="crispEdges"/>
<rect x="67" y="557" width="5" height="44" fill="#8000ff" shape-rendering="crispEdges"/>
<rect x="75" y="557" width="5" height="41" fill="#8000ff" shape-rendering="crispEdges"/>
<rect x="83" y="557" width="5" height="48" fill="#ff0000" shape-rendering="crispEdges"/>
<rect x="91" y="557" width="5" height="59" fill="#ff0000" shape-rendering="crispEdges"/>
<rect x="99" y="557" width="5" height="64" fill="#ff0000" shape-rendering="crispEdges"/>
<rect x="107" y="557" width="5" height="65" fill="#ff0000" shape-rendering="crispEdges"/>
<rect x="115" y="557" width="5" height="62" fill="#8000ff" shape-rendering="crispEdges"/>
<rect x="123" y="557" width="5" height="72" fill="#ff0000" shape-rendering="crispEdges"/>
<rect x="131" y="557" width="5" height="66" fill="#8000ff" shape-rendering="crispEdges"/>
<rect x="139" y="557" width="5" height="67" fill="#ff0000" shape-rendering="crispEdges"/>
<rect x="147" y="557" width="5" height="73" fill="#ff0000" shape-rendering="crispEdges"/>
<rect x="155" y="557" width="5" height="74" fill="#ff0000" shape-rendering="crispEdges"/>
<rect x="163" y="557" width="5" height="73" fill="#8000ff" shape-rendering="crispEdges"/>
<rect x="171" y="557" width="5" height="69" fill="#8000ff" shape-rendering="crispEdges"/>
<rect x="179" y="557" width="5" height="71" fill="#ff0000" shape-rendering="crispEdges"/>
<rect x="187" y="557" width="5" height="70" fill="#8000ff" shape-rendering="crispEdges"/>
<rect x="195" y="557" width="5" height="60" fill="#8000ff" shape-rendering="crispEdges"/>
<rect x="203" y="557" width="5" height="53" fill="#8000ff" shape-rendering="crispEdges"/>
<rect x="211" y="557" width="5" height="43" fill="#8000ff" shape-rendering="crispEdges"/>
<rect x="219" y="557" width="5" height="38" fill="#8000ff" shape-rendering="crispEdges"/>
<rect x="227" y="557" width="5" height="43" fill="#ff0000" shape-rendering="crispEdges"/>
<rect x="235" y="557" width="5" height="48" fill="#ff0000" shape-rendering="crispEdges"/>
<rect x="243" y="557" width="5" height="48" fill="#8000ff" shape-rendering="crispEdges"/>
<rect x="251" y="557" width="5" height="47" fill="#8000ff" shape-rendering="crispEdges"/>
<rect x="259" y="557" width="5" height="55" fill="#ff0000" shape-rendering="crispEdges"/>
<rect x="267" y="557" width="5" height="48" fill="#8000ff" shape-rendering="crispEdges"/>
<rect x="275" y="557" width="5" height="60" fill="#ff0000" shape-rendering="crispEdges"/>
<rect x="283" y="557" width="5" height="63" fill="#ff0000" shape-rendering="crispEdges"/>
<rect x="291" y="557" width="5" height="62" fill="#8000ff" shape-rendering="crispEdges"/>
<rect x="299" y="557" width="5" height="65" fill="#ff0000" shape-rendering="crispEdges"/>
<rect x="307" y="557" width="5" height="65" fill="#ff0000" shape-rendering="crispEdges"/>
<rect x="315" y="557" width="5" height="80" fill="#ff0000" shape-rendering="crispEdges"/>
<rect x="323" y="557" width="5" height="82" fill="#ff0000" shape-rendering="crispEdges"/>
<rect x="331" y="557" width="5" height="99" fill="#ff0000" shape-rendering="crispEdges"/>
<rect x="339" y="557" width="5" height="114" fill="#ff0000" shape-rendering="crispEdges"/>
<rect x="347" y="557" width="5" height="123" fill="#ff0000" shape-rendering="crispEdges"/>
<rect x="355" y="557" width="5" height="127" fill="#ff0000" shape-rendering="crispEdges"/>
<rect x="363" y="557" width="5" height="134" fill="#ff0000" shape-rendering="crispEdges"/>
<rect x="371" y="557" width="5" height="142" fill="#ff0000" shape-rendering="crispEdges"/>
<rect x="379" y="557" width="5" height="156" fill="#ff0000" shape-rendering="crispEdges"/>
<rect x="387" y="557" width="5" height="153" fill="#8000ff" shape-rendering="crispEdges"/>
<rect x="395" y="557" width="5" height="148" fill="#8000ff" shape-rendering="crispEdges"/>
<rect x="403" y="557" width="5" height="139" fill="#8000ff" shape-rendering="crispEdges"/>
<rect x="411" y="557" width="5" height="135" fill="#8000ff" shape-rendering="crispEdges"/>
<rect x="419" y="557" width="5" height="133" fill="#8000ff" shape-rendering="crispEdges"/>
<rect x="427" y="557" width="5" height="131" fill="#8000ff" shape-rendering="crispEdges"/>
<rect x="435" y="557" width="5" height="123" fill="#8000ff" shape-rendering="crispEdges"/>
<rect x="443" y="557" width="5" height="111" fill="#8000ff" shape-rendering="crispEdges"/>
<rect x="451" y="557" width="5" height="105" fill="#8000ff" shape-rendering="crispEdges"/>
<rect x="459" y="557" width="5" height="98" fill="#8000ff" shape-rendering="crispEdges"/>
<path d="M13 557.5H582" stroke="#4a3aa0" stroke-width="1" opacity="0.55" stroke-dasharray="10 3" shape-rendering="crispEdges"/>
<polyline points="13.0,595.6 46.0,630.0 58.6,634.0 77.6,626.0 109.0,612.0 122.0,611.0 142.0,616.0 157.0,623.5 168.0,624.0 190.4,626.8 205.6,624.2 220.8,617.7 238.5,610.3 261.3,604.5 268.9,603.7 279.0,605.0 301.8,611.6 315.0,616.4 352.5,642.5 380.4,671.6 403.0,693.0 418.3,697.0 433.5,697.7 446.0,693.0 459.3,683.0" stroke="#30e030" stroke-width="1" stroke-dasharray="5 3" fill="none" shape-rendering="crispEdges"/>
<path d="M12.5 135V546.5H582.5V135M12.5 135.5H582M12.5 548V720.5H582.5V548M12.5 548.5H582" stroke="#fff" stroke-width="1" fill="none" shape-rendering="crispEdges"/>
<path d="M583 137.5H585 M583 177.5H585 M583 218.5H585 M583 259.5H585 M583 300.5H585 M583 341.5H585 M583 382.5H585 M583 423.5H585 M583 464.5H585 M583 505.5H585 M583 550.5H584M583 557.5H584M583 713.5H584 M13.5 721V724 M77.5 721V724 M141.5 721V724 M205.5 721V724 M269.5 721V724 M333.5 721V724 M397.5 721V724 M461.5 721V724" stroke="#fff" stroke-width="1" shape-rendering="crispEdges"/>
</svg>
<!-- status bar -->
<div class="abs" style="left:8px;top:738px;width:616px;height:22px;background:#f0f0f0"></div>
<div class="abs" style="left:10px;top:738px;width:614px;height:2px;background:#fff"></div>
<svg class="abs" style="left:0;top:738px" width="632" height="24" viewBox="0 738 632 24">
<g stroke="#989898" shape-rendering="crispEdges"><path d="M14.500 743v16M116.500 743v16M187.500 743v16M258.500 743v16M326.500 743v16M396.500 743v16M462.500 743v16"/></g>
<g stroke="#fafafa" shape-rendering="crispEdges"><path d="M15.500 743v16M117.500 743v16M188.500 743v16M259.500 743v16M327.500 743v16M397.500 743v16M463.500 743v16"/></g>
<path d="M11.500 747v7" stroke="#901040" stroke-width="1"/><path d="M10.500 747v7" stroke="#f0e060" stroke-width="1"/>
<g shape-rendering="crispEdges"><rect x="468" y="745" width="2" height="9" fill="#4c6c00"/><rect x="471" y="745" width="2" height="8" fill="#4c6c00"/><rect x="474" y="745" width="2" height="7" fill="#4c6c00"/><rect x="477" y="745" width="2" height="6" fill="#4c6c00"/><rect x="480" y="745" width="2" height="5" fill="#4c6c00"/><rect x="483" y="745" width="2" height="4" fill="#4c6c00"/><rect x="486" y="745" width="2" height="3" fill="#4c6c00"/><rect x="489" y="745" width="2" height="2" fill="#4c6c00"/><rect x="468" y="755" width="2" height="2" fill="#900000"/><rect x="471" y="754" width="2" height="3" fill="#900000"/><rect x="474" y="753" width="2" height="4" fill="#900000"/><rect x="477" y="752" width="2" height="5" fill="#900000"/><rect x="480" y="751" width="2" height="6" fill="#900000"/><rect x="483" y="750" width="2" height="7" fill="#900000"/><rect x="486" y="749" width="2" height="8" fill="#900000"/><rect x="489" y="748" width="2" height="9" fill="#900000"/></g>
<g stroke="#a4a4a4" stroke-width="1.500"><path d="M609 760l15-15M613.500 760l10.500-10.500M618 760l6-6"/></g>
<g stroke="#fff" stroke-width="1.200"><path d="M610.800 760l13.200-13.200M615.300 760l8.700-8.700M619.800 760l4.200-4.200"/></g>
</svg>
<div class="abs" style="left:584px;top:406px;width:36px;height:11px;background:#ff0000"></div>
<div class="abs" style="left:584px;top:429px;width:36px;height:11px;background:#ff0000"></div>
<div class="abs" style="left:584px;top:458px;width:36px;height:11px;background:#fff"></div>
<div class="t" id="t0" style="left:28.82px;top:8.82px;font-size:12.5px;color:#000;transform:scaleX(0.9253);text-shadow:0 0 4px #fff,0 0 8px #fff;-webkit-text-stroke:0.22px #000">65378: FreshForex Terminal - [EURCHF,H4]</div>
<div class="t" id="t1" style="left:35.62px;top:34.72px;font-size:12.5px;color:#000;transform:scaleX(0.9615);;-webkit-text-stroke:0.22px #000">Файл</div>
<div class="t" id="t2" style="left:82.42px;top:34.72px;font-size:12.5px;color:#000;transform:scaleX(0.8906);;-webkit-text-stroke:0.22px #000">Вид</div>
<div class="t" id="t3" style="left:119.42px;top:34.72px;font-size:12.5px;color:#000;transform:scaleX(0.9243);;-webkit-text-stroke:0.22px #000">Вставка</div>
<div class="t" id="t4" style="left:179.62px;top:34.72px;font-size:12.5px;color:#000;transform:scaleX(0.8863);;-webkit-text-stroke:0.22px #000">Графики</div>
<div class="t" id="t5" style="left:240.22px;top:34.72px;font-size:12.5px;color:#000;transform:scaleX(0.9074);;-webkit-text-stroke:0.22px #000">Сервис</div>
<div class="t" id="t6" style="left:295.62px;top:34.72px;font-size:12.5px;color:#000;transform:scaleX(0.9313);;-webkit-text-stroke:0.22px #000">Окно</div>
<div class="t" id="t7" style="left:339.32px;top:34.72px;font-size:12.5px;color:#000;transform:scaleX(0.9185);;-webkit-text-stroke:0.22px #000">Справка</div>
<div class="t" id="t8" style="left:272.02px;top:59.52px;font-size:12.5px;color:#000;transform:scaleX(0.9271);;-webkit-text-stroke:0.22px #000">Новый Ордер</div>
<div class="t" id="t9" style="left:405.82px;top:59.52px;font-size:12.5px;color:#000;transform:scaleX(0.9528);;-webkit-text-stroke:0.22px #000">Авто-торговля</div>
<div class="t" id="t10" style="left:21.20px;top:115.03px;font-size:10px;color:#3c3c3c;transform:scaleX(0.9564);">M1</div>
<div class="t" id="t11" style="left:49.10px;top:115.03px;font-size:10px;color:#3c3c3c;transform:scaleX(0.9708);">M5</div>
<div class="t" id="t12" style="left:74.90px;top:115.03px;font-size:10px;color:#3c3c3c;transform:scaleX(0.9561);">M15</div>
<div class="t" id="t13" style="left:103.00px;top:115.03px;font-size:10px;color:#3c3c3c;transform:scaleX(0.9716);">M30</div>
<div class="t" id="t14" style="left:133.90px;top:115.03px;font-size:10px;color:#3c3c3c;transform:scaleX(1.0002);">H1</div>
<div class="t" id="t15" style="left:161.20px;top:115.03px;font-size:10px;color:#3c3c3c;transform:scaleX(1.0549);">H4</div>
<div class="t" id="t16" style="left:189.80px;top:115.03px;font-size:10px;color:#3c3c3c;transform:scaleX(1.0081);">D1</div>
<div class="t" id="t17" style="left:217.30px;top:115.03px;font-size:10px;color:#3c3c3c;transform:scaleX(1.0267);">W1</div>
<div class="t" id="t18" style="left:244.00px;top:115.03px;font-size:10px;color:#3c3c3c;transform:scaleX(1.0345);">MN</div>
<div class="t" id="t19" style="left:588.11px;top:131.20px;font-size:9.8px;color:#fff;transform:scaleX(0.9434);;-webkit-text-stroke:0.3px #fff">1.2180</div>
<div class="t" id="t20" style="left:588.11px;top:171.20px;font-size:9.8px;color:#fff;transform:scaleX(0.9434);;-webkit-text-stroke:0.3px #fff">1.2175</div>
<div class="t" id="t21" style="left:588.11px;top:212.20px;font-size:9.8px;color:#fff;transform:scaleX(0.9434);;-webkit-text-stroke:0.3px #fff">1.2170</div>
<div class="t" id="t22" style="left:588.11px;top:253.20px;font-size:9.8px;color:#fff;transform:scaleX(0.9434);;-webkit-text-stroke:0.3px #fff">1.2165</div>
<div class="t" id="t23" style="left:588.11px;top:294.20px;font-size:9.8px;color:#fff;transform:scaleX(0.9434);;-webkit-text-stroke:0.3px #fff">1.2160</div>
<div class="t" id="t24" style="left:588.11px;top:335.20px;font-size:9.8px;color:#fff;transform:scaleX(0.9434);;-webkit-text-stroke:0.3px #fff">1.2155</div>
<div class="t" id="t25" style="left:588.11px;top:376.20px;font-size:9.8px;color:#fff;transform:scaleX(0.9434);;-webkit-text-stroke:0.3px #fff">1.2150</div>
<div class="t" id="t26" style="left:588.11px;top:417.20px;font-size:9.8px;color:#fff;transform:scaleX(0.9434);;-webkit-text-stroke:0.3px #fff">1.2145</div>
<div class="t" id="t27" style="left:588.11px;top:499.20px;font-size:9.8px;color:#fff;transform:scaleX(0.9434);;-webkit-text-stroke:0.3px #fff">1.2135</div>
<div class="t" id="t28" style="left:585.51px;top:551.00px;font-size:9.8px;color:#fff;transform:scaleX(0.9647);;-webkit-text-stroke:0.3px #fff">0.00003</div>
<div class="t" id="t29" style="left:584.71px;top:551.00px;font-size:9.8px;color:#fff;;-webkit-text-stroke:0.3px #fff">0.00</div>
<div class="t" id="t30" style="left:585.81px;top:708.20px;font-size:9.8px;color:#fff;transform:scaleX(0.8885);;-webkit-text-stroke:0.3px #fff">-0.00074</div>
<div class="t" id="t31" style="left:11.51px;top:724.20px;font-size:9.8px;color:#fff;transform:scaleX(0.9376);;-webkit-text-stroke:0.3px #fff">20 Jun 2014</div>
<div class="t" id="t32" style="left:75.51px;top:724.20px;font-size:9.8px;color:#fff;transform:scaleX(0.9456);;-webkit-text-stroke:0.3px #fff">23 Jun 08:00</div>
<div class="t" id="t33" style="left:139.51px;top:724.20px;font-size:9.8px;color:#fff;transform:scaleX(0.9456);;-webkit-text-stroke:0.3px #fff">24 Jun 16:00</div>
<div class="t" id="t34" style="left:203.51px;top:724.20px;font-size:9.8px;color:#fff;transform:scaleX(0.9456);;-webkit-text-stroke:0.3px #fff">26 Jun 00:00</div>
<div class="t" id="t35" style="left:267.51px;top:724.20px;font-size:9.8px;color:#fff;transform:scaleX(0.9456);;-webkit-text-stroke:0.3px #fff">27 Jun 08:00</div>
<div class="t" id="t36" style="left:331.51px;top:724.20px;font-size:9.8px;color:#fff;transform:scaleX(0.9456);;-webkit-text-stroke:0.3px #fff">30 Jun 16:00</div>
<div class="t" id="t37" style="left:395.51px;top:724.20px;font-size:9.8px;color:#fff;transform:scaleX(0.9611);;-webkit-text-stroke:0.3px #fff">2 Jul 00:00</div>
<div class="t" id="t38" style="left:459.51px;top:724.20px;font-size:9.8px;color:#fff;transform:scaleX(0.9611);;-webkit-text-stroke:0.3px #fff">3 Jul 08:00</div>
<div class="t" id="t39" style="left:27.61px;top:139.20px;font-size:9.8px;color:#fff;transform:scaleX(0.9312);background:#000;word-spacing:1.2px;-webkit-text-stroke:0.3px #fff">EURCHF,H4  1.2141 1.2141 1.2139 1.2140</div>
<div class="t" id="t40" style="left:16.81px;top:551.90px;font-size:9.8px;color:#fff;transform:scaleX(0.9533);;-webkit-text-stroke:0.3px #fff">MACD(12,26,9) -0.00044 0.00000 0.00000 -0.00056 0.00000</div>
<div class="t" id="t41" style="left:527.02px;top:744.52px;font-size:12.5px;color:#000;transform:scaleX(0.9454);;-webkit-text-stroke:0.22px #000">144/0 kb</div>
<div class="t" id="t42" style="left:588.11px;top:406.20px;font-size:9.8px;color:#3c0808;transform:scaleX(0.9434);;-webkit-text-stroke:0.3px #3c0808">1.2146</div>
<div class="t" id="t43" style="left:588.11px;top:429.20px;font-size:9.8px;color:#3c0808;transform:scaleX(0.9434);;-webkit-text-stroke:0.3px #3c0808">1.2144</div>
<div class="t" id="t44" style="left:588.11px;top:458.20px;font-size:9.8px;color:#000;transform:scaleX(0.9434);;-webkit-text-stroke:0.3px #000">1.2140</div>
</body></html>
